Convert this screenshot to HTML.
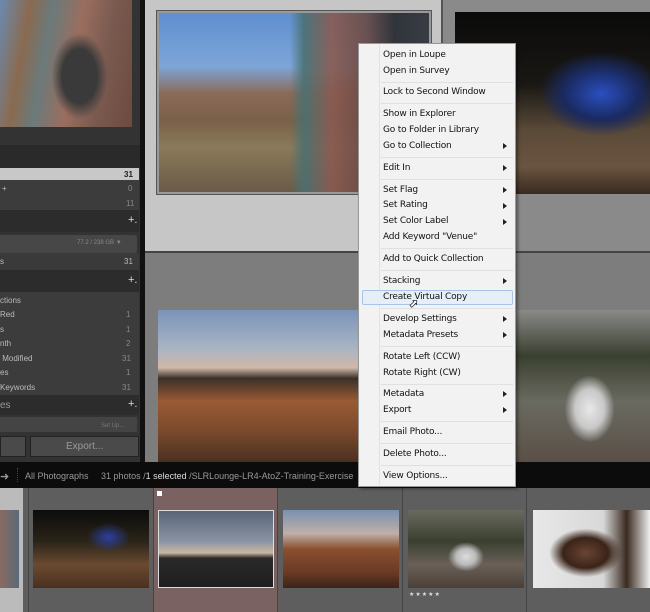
<!DOCTYPE html>
<html><head><meta charset="utf-8"><style>
*{margin:0;padding:0;box-sizing:border-box}
body{width:650px;height:612px;overflow:hidden;position:relative;background:#7d7d7d;font-family:"Liberation Sans",sans-serif}
.a{position:absolute}
.lp{font-size:8px;color:#bbb}
.mi{position:absolute;left:383px;font-size:9px;color:#111;font-family:"DejaVu Sans",sans-serif;letter-spacing:-0.2px}
.ar{position:absolute;left:503px;width:0;height:0;border-left:4px solid #222;border-top:3px solid transparent;border-bottom:3px solid transparent}
.sep{position:absolute;left:381px;width:132px;height:1px;background:#e0e0e0}
</style></head><body>
<!-- left panel -->
<div class="a" style="left:0;top:0;width:140px;height:462px;background:#333"></div>
<div class="a" style="left:0;top:0;width:132px;height:127px;background:linear-gradient(100deg,#6a8ab0 0%,#8a6a50 20%,#6b7a7a 35%,#9a6e5e 55%,#7a5a50 75%,#6d4a40 100%)"></div>
<div class="a" style="left:30px;top:0;width:90px;height:127px;background:radial-gradient(ellipse at 55% 60%,#3a3a3a 0 25%,transparent 40%)"></div>
<div class="a" style="left:0;top:145px;width:140px;height:23px;background:#2a2a2a"></div>
<div class="a" style="left:0;top:168px;width:139px;height:12px;background:#c8c8c8"></div>
<div class="a lp" style="left:124px;top:170px;color:#222;font-weight:bold">31</div>
<div class="a" style="left:0;top:180px;width:139px;height:30px;background:#3c3c3c"></div>
<div class="a lp" style="left:2px;top:184px">+</div><div class="a lp" style="left:128px;top:184px;color:#888">0</div>
<div class="a lp" style="left:126px;top:199px;color:#888">11</div>
<div class="a" style="left:0;top:210px;width:139px;height:22px;background:#2c2c2c"></div>
<div class="a lp" style="left:128px;top:214px;font-size:11px;color:#ddd">+.</div>
<div class="a" style="left:0;top:235px;width:137px;height:18px;background:#474747;border-radius:0 3px 3px 0"></div>
<div class="a lp" style="left:77px;top:240px;font-size:6px;color:#888">77.2 / 238 GB &#9660;</div>
<div class="a" style="left:0;top:253px;width:139px;height:17px;background:#3a3a3a"></div>
<div class="a lp" style="left:0;top:257px">s</div><div class="a lp" style="left:124px;top:257px">31</div>
<div class="a" style="left:0;top:270px;width:139px;height:22px;background:#2c2c2c"></div>
<div class="a lp" style="left:128px;top:274px;font-size:11px;color:#ddd">+.</div>
<div class="a" style="left:0;top:292px;width:139px;height:103px;background:#3c3c3c"></div>
<div class="a lp" style="left:0;top:296px">ctions</div>
<div class="a lp" style="left:0;top:310px">Red</div><div class="a lp" style="left:126px;top:310px;color:#888">1</div>
<div class="a lp" style="left:0;top:325px">s</div><div class="a lp" style="left:126px;top:325px;color:#888">1</div>
<div class="a lp" style="left:0;top:339px">nth</div><div class="a lp" style="left:126px;top:339px;color:#888">2</div>
<div class="a lp" style="left:0;top:354px">&nbsp;Modified</div><div class="a lp" style="left:122px;top:354px;color:#888">31</div>
<div class="a lp" style="left:0;top:368px">es</div><div class="a lp" style="left:126px;top:368px;color:#888">1</div>
<div class="a lp" style="left:0;top:383px">Keywords</div><div class="a lp" style="left:122px;top:383px;color:#888">31</div>
<div class="a" style="left:0;top:395px;width:139px;height:20px;background:#2c2c2c"></div>
<div class="a lp" style="left:0;top:400px;font-size:10px;color:#999">es</div>
<div class="a lp" style="left:128px;top:398px;font-size:11px;color:#ddd">+.</div>
<div class="a" style="left:0;top:417px;width:137px;height:15px;background:#444"></div>
<div class="a lp" style="left:101px;top:423px;font-size:6px;color:#777">Set Up...</div>
<div class="a" style="left:0;top:436px;width:26px;height:21px;background:#4a4a4a;border:1px solid #222"></div>
<div class="a" style="left:30px;top:436px;width:109px;height:21px;background:#4a4a4a;border:1px solid #222"></div>
<div class="a lp" style="left:66px;top:441px;font-size:10px;color:#999">Export...</div>
<div class="a" style="left:140px;top:0;width:5px;height:462px;background:#111"></div>
<!-- grid -->
<div class="a" style="left:145px;top:0;width:296px;height:251px;background:#c6c6c6"></div>
<div class="a" style="left:441px;top:0;width:2px;height:251px;background:#555"></div>
<div class="a" style="left:443px;top:0;width:207px;height:251px;background:#8a8a8a"></div>
<div class="a" style="left:145px;top:251px;width:505px;height:2px;background:#444"></div>
<div class="a" style="left:156px;top:10px;width:276px;height:185px;background:#999;border:1px solid #555"></div>
<div class="a" style="left:159px;top:13px;width:270px;height:179px;background:linear-gradient(180deg,#5f8fd0 0%,#7ea5d8 30%,#8a6a58 45%,#7a6048 60%,#8a7a5a 75%,#6a5a48 100%)"></div>
<div class="a" style="left:290px;top:13px;width:139px;height:179px;background:linear-gradient(90deg,transparent 0,#4a7070 10%,#8a5a50 30%,#6a4a44 55%,#2a2a2a 75%,#333 100%);opacity:.9"></div>
<div class="a" style="left:455px;top:12px;width:195px;height:182px;background:radial-gradient(ellipse at 75% 45%,#2a50c0 0,#1a2a60 18%,transparent 30%),linear-gradient(180deg,#0a0a0a 0%,#1a1814 40%,#5a4a38 65%,#6a5440 85%,#3a2a20 100%)"></div>
<div class="a" style="left:158px;top:310px;width:200px;height:152px;background:linear-gradient(180deg,#7a94b8 0%,#a8b4c4 25%,#d0b8a8 38%,#3a3028 45%,#9a5a34 60%,#7a4a2c 80%,#4a3020 100%)"></div>
<div class="a" style="left:516px;top:310px;width:134px;height:152px;background:radial-gradient(ellipse at 55% 65%,#e8e8e8 0,#c8c8c8 14%,transparent 24%),linear-gradient(180deg,#8a8a88 0%,#3a4030 30%,#6a6a60 60%,#5a5048 100%)"></div>
<!-- toolbar -->
<div class="a" style="left:0;top:462px;width:650px;height:26px;background:#0c0c0c"></div>
<div class="a" style="left:0;top:470px;font-size:11px;color:#999">&#10140;</div>
<div class="a" style="left:17px;top:468px;width:1px;height:14px;border-left:1px dotted #444"></div>
<div class="a" style="left:25px;top:471px;font-size:9px;color:#999;white-space:nowrap">All Photographs&nbsp;&nbsp;&nbsp;&nbsp;&nbsp;31 photos /<b style="color:#ddd;font-weight:normal">1 selected</b> /SLRLounge-LR4-AtoZ-Training-Exercise</div>
<!-- filmstrip -->
<div class="a" style="left:0;top:488px;width:650px;height:124px;background:#5e5e5e"></div>
<div class="a" style="left:0;top:488px;width:23px;height:124px;background:#bbb"></div>
<div class="a" style="left:0;top:510px;width:19px;height:78px;background:linear-gradient(90deg,#8a6a60,#5a6a7a)"></div>
<div class="a" style="left:153px;top:488px;width:124px;height:124px;background:#7a6262"></div>
<div class="a" style="left:28px;top:488px;width:1px;height:124px;background:#444"></div>
<div class="a" style="left:153px;top:488px;width:1px;height:124px;background:#444"></div>
<div class="a" style="left:277px;top:488px;width:1px;height:124px;background:#444"></div>
<div class="a" style="left:402px;top:488px;width:1px;height:124px;background:#444"></div>
<div class="a" style="left:526px;top:488px;width:1px;height:124px;background:#444"></div>
<div class="a" style="left:157px;top:491px;width:5px;height:5px;background:#fff"></div>
<div class="a" style="left:33px;top:510px;width:116px;height:78px;background:radial-gradient(ellipse at 65% 35%,#2a40a0 0,transparent 20%),linear-gradient(180deg,#0c0c0c 0%,#2a2418 40%,#6a4a30 70%,#4a3020 100%)"></div>
<div class="a" style="left:158px;top:510px;width:116px;height:78px;border:1px solid #ddd;background:linear-gradient(180deg,#5a6478 0%,#8a94a4 40%,#c8b8a0 55%,#2a2a2a 62%,#1e1e1e 100%)"></div>
<div class="a" style="left:283px;top:510px;width:116px;height:78px;background:linear-gradient(180deg,#7a90b0 0%,#c0b0a8 30%,#8a5030 50%,#6a3a24 80%,#3a2418 100%)"></div>
<div class="a" style="left:408px;top:510px;width:116px;height:78px;background:radial-gradient(ellipse at 50% 60%,#ddd 0,#bbb 12%,transparent 22%),linear-gradient(180deg,#6a6a60 0%,#3a4030 40%,#6a6058 70%,#4a4038 100%)"></div>
<div class="a" style="left:409px;top:591px;font-size:6px;color:#ddd;letter-spacing:1px">&#9733;&#9733;&#9733;&#9733;&#9733;</div>
<div class="a" style="left:533px;top:510px;width:117px;height:78px;background:radial-gradient(ellipse at 45% 55%,#6a4434 0,#3a2418 25%,transparent 40%),linear-gradient(90deg,#e8e8e8 0%,#d8d8d8 60%,#3a2a20 80%,#f0f0f0 100%)"></div>
<!-- context menu -->
<div class="a" style="left:358px;top:43px;width:158px;height:444px;background:#f2f2f2;border:1px solid #999;box-shadow:2px 2px 3px rgba(0,0,0,.4)"></div>
<div class="a" style="left:379px;top:45px;width:1px;height:440px;background:#e2e2e2"></div>
<div class="a" style="left:362px;top:290px;width:151px;height:15px;background:#e6eef8;border:1px solid #a8c4e8;border-radius:2px"></div>
<div class="mi" style="top:50px">Open in Loupe</div>
<div class="mi" style="top:66px">Open in Survey</div>
<div class="sep" style="top:82px"></div>
<div class="mi" style="top:87px">Lock to Second Window</div>
<div class="sep" style="top:103px"></div>
<div class="mi" style="top:109px">Show in Explorer</div>
<div class="mi" style="top:125px">Go to Folder in Library</div>
<div class="mi" style="top:141px">Go to Collection</div><div class="ar" style="top:143px"></div>
<div class="sep" style="top:157px"></div>
<div class="mi" style="top:163px">Edit In</div><div class="ar" style="top:165px"></div>
<div class="sep" style="top:179px"></div>
<div class="mi" style="top:185px">Set Flag</div><div class="ar" style="top:187px"></div>
<div class="mi" style="top:200px">Set Rating</div><div class="ar" style="top:203px"></div>
<div class="mi" style="top:216px">Set Color Label</div><div class="ar" style="top:219px"></div>
<div class="mi" style="top:232px">Add Keyword "Venue"</div>
<div class="sep" style="top:248px"></div>
<div class="mi" style="top:254px">Add to Quick Collection</div>
<div class="sep" style="top:270px"></div>
<div class="mi" style="top:276px">Stacking</div><div class="ar" style="top:278px"></div>
<div class="mi" style="top:292px">Create Virtual Copy</div>
<div class="a" style="left:409px;top:297px;font-size:11px;color:#fff;-webkit-text-stroke:0.6px #000">&#11016;</div>
<div class="sep" style="top:308px"></div>
<div class="mi" style="top:314px">Develop Settings</div><div class="ar" style="top:316px"></div>
<div class="mi" style="top:330px">Metadata Presets</div><div class="ar" style="top:332px"></div>
<div class="sep" style="top:346px"></div>
<div class="mi" style="top:352px">Rotate Left (CCW)</div>
<div class="mi" style="top:368px">Rotate Right (CW)</div>
<div class="sep" style="top:384px"></div>
<div class="mi" style="top:389px">Metadata</div><div class="ar" style="top:391px"></div>
<div class="mi" style="top:405px">Export</div><div class="ar" style="top:407px"></div>
<div class="sep" style="top:421px"></div>
<div class="mi" style="top:427px">Email Photo...</div>
<div class="sep" style="top:443px"></div>
<div class="mi" style="top:449px">Delete Photo...</div>
<div class="sep" style="top:465px"></div>
<div class="mi" style="top:471px">View Options...</div>
</body></html>
